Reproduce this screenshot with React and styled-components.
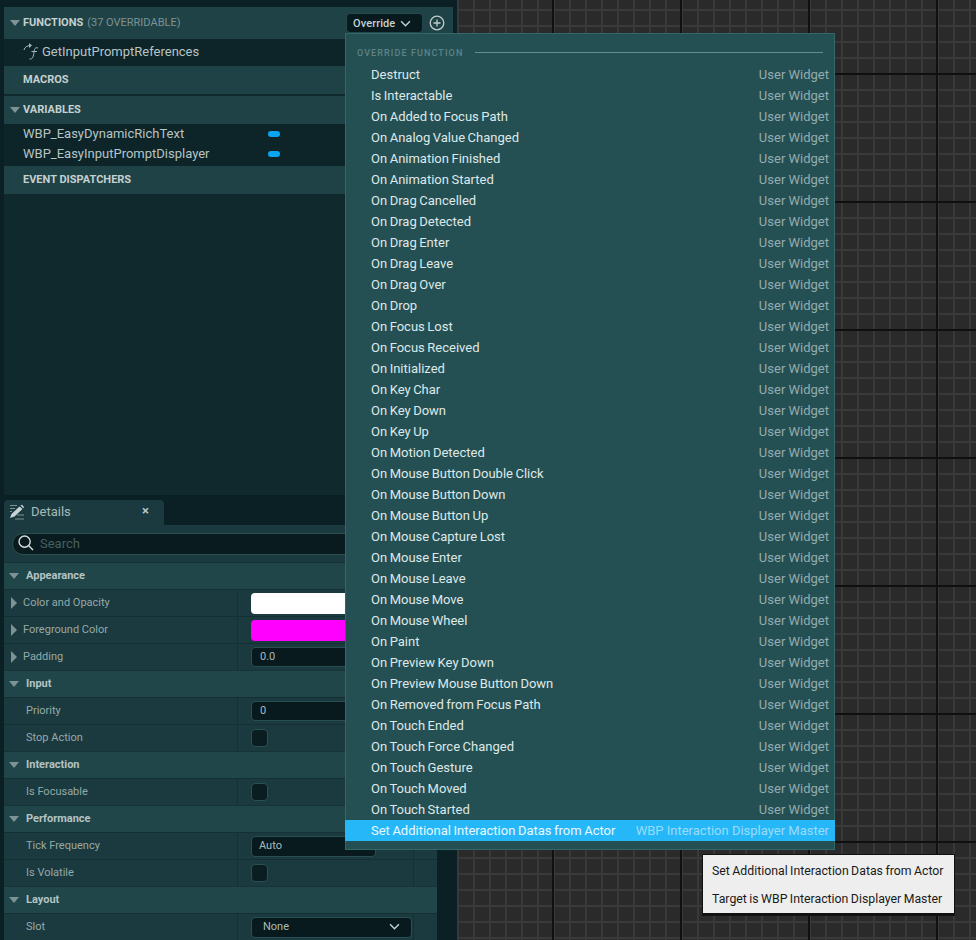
import React from "react";
import styled, { createGlobalStyle } from "styled-components";

const Global = createGlobalStyle`
  html, body { margin: 0; padding: 0; background: #0b2024; }
  * { box-sizing: border-box; }
`;

const FONT = `Roboto, "Liberation Sans", sans-serif`;

const Page = styled.div`
  position: relative;
  width: 976px;
  height: 940px;
  overflow: hidden;
  display: flex;
  font-family: ${FONT};
  background: #0b2024;
`;

const LeftColumn = styled.div`
  width: 457px;
  flex: none;
  height: 940px;
  display: flex;
  flex-direction: column;
  padding: 7px 0 0 4px;
`;

const Graph = styled.div`
  flex: 1;
  background-color: #2a2a2a;
  background-image:
    linear-gradient(90deg, #101010 2px, transparent 2px),
    linear-gradient(180deg, #101010 2px, transparent 2px),
    linear-gradient(90deg, #393939 2px, transparent 2px),
    linear-gradient(180deg, #393939 2px, transparent 2px);
  background-size: 128px 128px, 128px 128px, 16px 16px, 16px 16px;
  background-position: 95px 0, 0 73px, 0 0, 0 9px;
`;

const MyBlueprint = styled.div`
  width: 449px;
  height: 488px;
  flex: none;
  background: #10292d;
`;

const SectionBar = styled.div`
  height: ${p => p.$h || 27}px;
  margin-top: ${p => p.$mt || 0}px;
  background: #1f4246;
  display: flex;
  align-items: center;
  padding: 0 0 2px 6px;
  gap: 3px;
  font-size: 11px;
  font-weight: 700;
  color: #c4d0d0;
  position: relative;
`;

const Triangle = styled.span`
  width: 0;
  height: 0;
  flex: none;
  margin-top: 2px;
  border-left: 5px solid transparent;
  border-right: 5px solid transparent;
  border-top: 6px solid #7d9294;
`;

const NoCaret = styled.span`
  width: 10px;
  flex: none;
`;

const Muted = styled.span`
  color: #7d9294;
  font-weight: 400;
  margin-left: 1px;
`;

const HeaderActions = styled.div`
  position: absolute;
  left: 342px;
  top: 6px;
  display: flex;
  align-items: center;
  gap: 6px;
`;

const OverrideButton = styled.div`
  width: 77px;
  height: 20px;
  border-radius: 4px;
  background: #081a1e;
  border: 1px solid #23484c;
  display: flex;
  align-items: center;
  padding-left: 6px;
  gap: 5px;
  color: #c6d2d2;
  font-size: 11px;
  letter-spacing: 0.1px;
  font-weight: 500;
`;

const FunctionRow = styled.div`
  height: 27px;
  background: #0d2429;
  display: flex;
  align-items: center;
  padding: 0 0 2px 19px;
  color: #b6c4c4;
  font-size: 13px;
`;

const VarRows = styled.div`
  background: #0d2429;
  height: 42px;
  display: flex;
  flex-direction: column;
`;

const VarRow = styled.div`
  height: 20px;
  display: flex;
  align-items: center;
  padding: 0 0 2px 19px;
  color: #b6c4c4;
  font-size: 13px;
  position: relative;
`;

const VarPill = styled.span`
  position: absolute;
  left: 264px;
  top: 7px;
  width: 12px;
  height: 6px;
  border-radius: 3px;
  background: #0aa5f0;
`;

const DetailsPanel = styled.div`
  flex: 1;
  width: 433px;
  margin-top: 5px;
  display: flex;
  flex-direction: column;
`;

const TabStrip = styled.div`
  height: 25px;
  flex: none;
  display: flex;
`;

const Tab = styled.div`
  width: 160px;
  height: 25px;
  background: #1a3a3f;
  border-radius: 4px 4px 0 0;
  display: flex;
  align-items: center;
  padding: 0 0 2px 5px;
  gap: 6px;
  color: #a9baba;
  font-size: 13px;
  position: relative;
`;

const TabClose = styled.span`
  position: absolute;
  left: 138px;
  top: 3px;
  font-size: 13px;
  font-weight: 700;
  color: #b9c6c6;
`;

const SearchWrap = styled.div`
  height: 37px;
  flex: none;
  background: #1a3a3f;
  padding: 8px 8px 0 8px;
`;

const SearchBox = styled.div`
  height: 22px;
  border-radius: 11px;
  background: #091b1f;
  border: 1px solid #2a4f53;
  display: flex;
  align-items: center;
  padding: 0 0 2px 4px;
  gap: 5px;
  color: #46605f;
  font-size: 13px;
`;

const Category = styled.div`
  height: 27px;
  flex: none;
  background: #20464a;
  border-top: 1px solid #163338;
  display: flex;
  align-items: center;
  padding: 0 0 2px 5px;
  gap: 7px;
  font-size: 11px;
  font-weight: 700;
  color: #b4c3c3;
`;

const PropRow = styled.div`
  height: 27px;
  flex: none;
  background: #1a3a3f;
  border-top: 1px solid #143035;
  display: grid;
  grid-template-columns: 234px 176px 1fr;
  font-size: 11px;
  color: #96a9a9;
`;

const PropName = styled.div`
  display: flex;
  align-items: center;
  padding: 0 0 2px ${p => (p.$caret ? 7 : 22)}px;
  gap: 6px;
  border-right: 1px solid #143035;
`;

const SideCaret = styled.span`
  width: 0;
  height: 0;
  flex: none;
  margin-top: 2px;
  border-top: 6px solid transparent;
  border-bottom: 6px solid transparent;
  border-left: 6px solid #7d9294;
`;

const PropValue = styled.div`
  display: flex;
  align-items: center;
  padding-left: 13px;
  border-right: 1px solid #143035;
`;

const Swatch = styled.div`
  width: 130px;
  height: 21px;
  border-radius: 4px;
  background: ${p => p.$c};
`;

const NumberBox = styled.div`
  width: 126px;
  height: 20px;
  border-radius: 4px;
  background: #081a1e;
  border: 1px solid #2a4f53;
  display: flex;
  align-items: center;
  padding: 0 0 2px 8px;
  color: #a9baba;
  font-size: 11px;
`;

const SelectBox = styled(NumberBox)`
  width: ${p => p.$w || 161}px;
  height: 21px;
  justify-content: space-between;
  padding: 0 ${p => p.$pad || 11}px 1px ${p => p.$pad || 11}px;
`;

const Check = styled.div`
  width: 17px;
  height: 18px;
  border-radius: 4px;
  background: #0a1d21;
  border: 1px solid #2b5054;
`;

const Menu = styled.div`
  position: absolute;
  left: 345px;
  top: 33px;
  width: 490px;
  height: 817px;
  background: #245054;
  border: 1px solid #35666a;
  padding-top: 10px;
`;

const MenuHeading = styled.div`
  height: 18px;
  margin-left: 11px;
  margin-right: 11px;
  display: flex;
  align-items: center;
  gap: 12px;
  font-size: 9px;
  font-weight: 500;
  letter-spacing: 1.1px;
  color: #5f8386;
  &::after {
    content: "";
    flex: 1;
    height: 1px;
    margin-bottom: 2px;
    background: #5f8f92;
  }
`;

const MenuRows = styled.div`
  margin-top: 2px;
`;

const MenuRow = styled.div`
  height: 21px;
  margin-left: -1px;
  margin-right: -1px;
  display: flex;
  align-items: center;
  justify-content: space-between;
  padding: 0 6px 0 26px;
  font-size: 13px;
  color: ${p => (p.$active ? "#e8f7ff" : "#dfe8e8")};
  background: ${p => (p.$active ? "#26b7f8" : "transparent")};
`;

const MenuName = styled.span`
  word-spacing: -0.7px;
`;

const MenuOwner = styled.span`
  color: ${p => (p.$active ? "#9adcfa" : "#94acae")};
`;

const Tooltip = styled.div`
  position: absolute;
  left: 702px;
  top: 854px;
  width: 253px;
  height: 62px;
  background: #eeeeee;
  border: 1px solid #111;
  border-bottom-width: 3px;
  padding: 2px 0 0 9px;
  font-size: 12.3px;
  word-spacing: -0.6px;
  line-height: 28px;
  white-space: nowrap;
  color: #1a1a1a;
`;

const FnIcon = () => (
  <svg width="19" height="19" viewBox="0 0 19 19" fill="none" stroke="#a6b6b6" strokeWidth="1">
    <path d="M1 8 C1.5 5 4 3.5 8 3.5" />
    <path d="M6 1 L9 3.5 L6 6" fill="#a6b6b6" stroke="none" />
    <path d="M15 6 C12 5 11.5 7 11 10 C10.5 14 10 17.5 6.5 17" />
    <path d="M8.5 9.5 H14" />
  </svg>
);

const Chevron = ({ size = 11, color = "#c6d2d2" }) => (
  <svg width={size} height={size} viewBox="0 0 10 10" fill="none" stroke={color} strokeWidth="1.3">
    <path d="M1 3 L5 7 L9 3" />
  </svg>
);

const PlusCircle = () => (
  <svg width="16" height="16" viewBox="0 0 16 16" fill="none" stroke="#c0cccc" strokeWidth="1.3">
    <circle cx="8" cy="8" r="6.8" />
    <path d="M8 4.5 V11.5 M4.5 8 H11.5" />
  </svg>
);

const Pencil = () => (
  <svg width="16" height="16" viewBox="0 0 16 16" fill="none">
    <path d="M1 14 L2.5 10 L10.5 2.5 L13.5 5 L5.5 12.5 Z" fill="#c9d5d5" />
    <path d="M11.5 1.5 L13 0.8 L15 3 L14.3 4.2 Z" fill="#c9d5d5" />
    <path d="M1 1.5 H8 M1 4.5 H6 M1 7.5 H3 M8 11 H15 M6 15 H15" stroke="#7d9294" strokeWidth="1" />
  </svg>
);

const SearchIcon = () => (
  <svg width="18" height="18" viewBox="0 0 18 18" fill="none" stroke="#d5dfdf" strokeWidth="1.4">
    <circle cx="7.6" cy="7.6" r="5.6" />
    <path d="M11.8 11.8 L16 16" />
  </svg>
);

const functions = [
  "Destruct", "Is Interactable", "On Added to Focus Path", "On Analog Value Changed",
  "On Animation Finished", "On Animation Started", "On Drag Cancelled", "On Drag Detected",
  "On Drag Enter", "On Drag Leave", "On Drag Over", "On Drop", "On Focus Lost",
  "On Focus Received", "On Initialized", "On Key Char", "On Key Down", "On Key Up",
  "On Motion Detected", "On Mouse Button Double Click", "On Mouse Button Down",
  "On Mouse Button Up", "On Mouse Capture Lost", "On Mouse Enter", "On Mouse Leave",
  "On Mouse Move", "On Mouse Wheel", "On Paint", "On Preview Key Down",
  "On Preview Mouse Button Down", "On Removed from Focus Path", "On Touch Ended",
  "On Touch Force Changed", "On Touch Gesture", "On Touch Moved", "On Touch Started",
];

export default function App() {
  return (
    <Page>
      <Global />
      <LeftColumn>
        <MyBlueprint>
          <SectionBar $h={32}>
            <Triangle />
            FUNCTIONS <Muted>(37 OVERRIDABLE)</Muted>
            <HeaderActions>
              <OverrideButton>Override <Chevron /></OverrideButton>
              <PlusCircle />
            </HeaderActions>
          </SectionBar>
          <FunctionRow><FnIcon />GetInputPromptReferences</FunctionRow>
          <SectionBar $h={28}><NoCaret />MACROS</SectionBar>
          <SectionBar $h={28} $mt={2}><Triangle />VARIABLES</SectionBar>
          <VarRows>
            <VarRow>WBP_EasyDynamicRichText<VarPill /></VarRow>
            <VarRow>WBP_EasyInputPromptDisplayer<VarPill /></VarRow>
          </VarRows>
          <SectionBar $h={28}><NoCaret />EVENT DISPATCHERS</SectionBar>
        </MyBlueprint>
        <DetailsPanel>
          <TabStrip>
            <Tab><Pencil />Details<TabClose>×</TabClose></Tab>
          </TabStrip>
          <SearchWrap>
            <SearchBox><SearchIcon />Search</SearchBox>
          </SearchWrap>
          <Category><Triangle />Appearance</Category>
          <PropRow><PropName $caret><SideCaret />Color and Opacity</PropName><PropValue><Swatch $c="#ffffff" /></PropValue></PropRow>
          <PropRow><PropName $caret><SideCaret />Foreground Color</PropName><PropValue><Swatch $c="#ff00ff" /></PropValue></PropRow>
          <PropRow><PropName $caret><SideCaret />Padding</PropName><PropValue><NumberBox>0.0</NumberBox></PropValue></PropRow>
          <Category><Triangle />Input</Category>
          <PropRow><PropName>Priority</PropName><PropValue><NumberBox>0</NumberBox></PropValue></PropRow>
          <PropRow><PropName>Stop Action</PropName><PropValue><Check /></PropValue></PropRow>
          <Category><Triangle />Interaction</Category>
          <PropRow><PropName>Is Focusable</PropName><PropValue><Check /></PropValue></PropRow>
          <Category><Triangle />Performance</Category>
          <PropRow><PropName>Tick Frequency</PropName><PropValue><SelectBox $w={125} $pad={7}>Auto</SelectBox></PropValue></PropRow>
          <PropRow><PropName>Is Volatile</PropName><PropValue><Check /></PropValue></PropRow>
          <Category><Triangle />Layout</Category>
          <PropRow><PropName>Slot</PropName><PropValue><SelectBox>None <Chevron /></SelectBox></PropValue></PropRow>
        </DetailsPanel>
      </LeftColumn>
      <Graph />
      <Menu>
        <MenuHeading>OVERRIDE FUNCTION</MenuHeading>
        <MenuRows>
          {functions.map(f => (
            <MenuRow key={f}><MenuName>{f}</MenuName><MenuOwner>User Widget</MenuOwner></MenuRow>
          ))}
          <MenuRow $active>
            <MenuName>Set Additional Interaction Datas from Actor</MenuName>
            <MenuOwner $active>WBP Interaction Displayer Master</MenuOwner>
          </MenuRow>
        </MenuRows>
      </Menu>
      <Tooltip>
        Set Additional Interaction Datas from Actor<br />
        Target is WBP Interaction Displayer Master
      </Tooltip>
    </Page>
  );
}
